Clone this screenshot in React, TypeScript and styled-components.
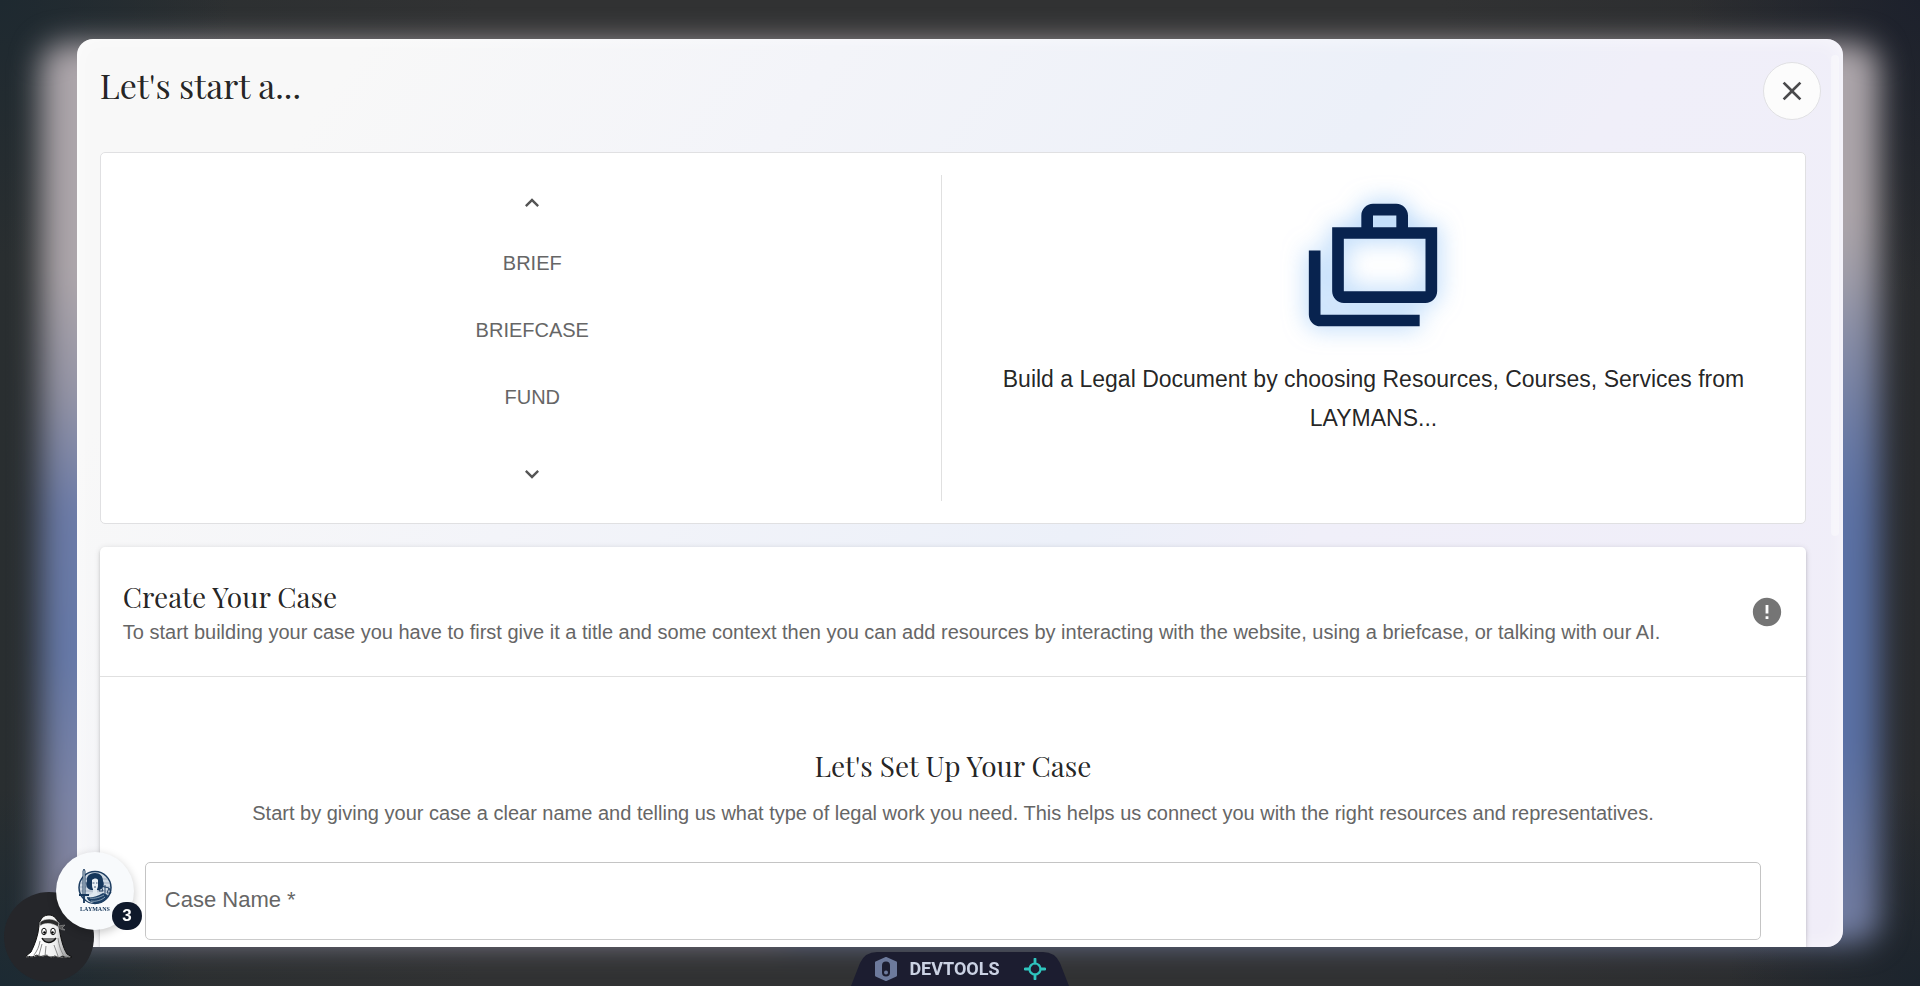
import React from "react";
import styled, { createGlobalStyle } from "styled-components";

const serif = `"Playfair Display", "Liberation Serif", serif`;
const sans = `"Liberation Sans", Arial, sans-serif`;

const GlobalStyle = createGlobalStyle`
  *, *::before, *::after { box-sizing: border-box; }
  body {
    margin: 0;
    font-family: ${sans};
    color: rgba(0, 0, 0, 0.87);
    background: #2c2f31;
  }
  h1, h2, h3, p, ul { margin: 0; padding: 0; font-weight: 400; }
  button { font: inherit; border: 0; padding: 0; background: none; cursor: pointer; }
`;

const Backdrop = styled.div`
  position: relative;
  height: 100vh;
  padding: 4vh 4vw;
  overflow: hidden;
  background:
    radial-gradient(ellipse 12% 26% at 0 0, #1e2930, transparent),
    radial-gradient(ellipse 12% 30% at 100% 0, #1d212c, transparent),
    radial-gradient(ellipse 10% 20% at 0 100%, #1c2a33, transparent),
    radial-gradient(ellipse 10% 20% at 100% 100%, #1c242d, transparent),
    linear-gradient(90deg, #292e30, #313233 25%, #313233 75%, #292b2e);
`;

const Glow = styled.div`
  position: absolute;
  inset: 43px 41px;
  border-radius: 24px;
  filter: blur(15px);
  background: linear-gradient(180deg, #aca5aa 0, #aca5aa 26%, #9494a6 39%, #6c7ba7 52%, #6679a8 68%, #7c84a6 84%, #868498 100%);
  &::after {
    content: "";
    position: absolute;
    inset: 0 0 0 40%;
    border-radius: inherit;
    background: linear-gradient(180deg, transparent 20%, #5a70a4 58%, #5a70a4 78%, #707ba0 96%);
  }
`;

const Dialog = styled.main`
  position: relative;
  height: 100%;
  display: flex;
  flex-direction: column;
  overflow: hidden;
  border-radius: 16px;
  background: linear-gradient(125deg, #f8f8f8 12%, #f3f4f9 32%, #ecf0f9 56%, #f0eff9 66%, #f0edf8);
  &::after {
    content: "";
    position: absolute;
    inset: 0;
    border-radius: inherit;
    pointer-events: none;
    box-shadow: inset 0 0 20px rgba(255, 255, 255, 0.6);
  }
`;

const DialogHeader = styled.header`
  flex: none;
  display: flex;
  justify-content: space-between;
  align-items: flex-start;
  padding: 23px 22px 32px 23px;
`;

const Title = styled.h1`
  font: 400 34px/46px ${serif};
`;

const CloseButton = styled.button`
  width: 58px;
  height: 58px;
  display: grid;
  place-items: center;
  border: 1px solid #e0e0e3;
  border-radius: 50%;
  background: #fcfcfc;
  color: #4a4a4c;
`;

const DialogBody = styled.div`
  flex: 1;
  min-height: 0;
  overflow: hidden;
  display: flex;
  flex-direction: column;
  gap: 23px;
  padding: 0 37px 0 23px;
  > * { flex: none; }
`;

const ScrollThumb = styled.div`
  position: absolute;
  top: 16px;
  right: 4px;
  width: 8px;
  height: 53%;
  border-radius: 4px;
  background: rgba(255, 255, 255, 0.4);
`;

const Chooser = styled.section`
  display: grid;
  grid-template-columns: minmax(0, 18fr) minmax(0, 19fr);
  padding: 22px 0 22px 23px;
  border: 1px solid #e0e0e2;
  border-radius: 5px;
  background: #ffffff;
`;

const Picker = styled.div`
  height: 326px;
  display: flex;
  flex-direction: column;
  align-items: center;
  border-right: 1px solid #e0e0e0;
`;

const ArrowButton = styled.button`
  width: 55px;
  height: 55px;
  display: grid;
  place-items: center;
  color: #555555;
`;

const Options = styled.ul`
  flex: 1;
  list-style: none;
`;

const Option = styled.button`
  display: block;
  width: 100%;
  height: 67px;
  font-size: 20px;
  color: #666666;
  text-transform: uppercase;
`;

const Summary = styled.div`
  display: flex;
  flex-direction: column;
  align-items: center;
  gap: 22px;
  padding: 23px;
  text-align: center;
  font-size: 23px;
  line-height: 39px;
  svg { filter: drop-shadow(0 0 12px rgba(100, 170, 245, 0.65)); }
`;

const Card = styled.section`
  border-radius: 5px;
  background: #ffffff;
  box-shadow: 0 2px 3px rgba(0, 0, 0, 0.16), 0 1px 6px rgba(0, 0, 0, 0.12);
`;

const CardHeader = styled.div`
  display: flex;
  align-items: center;
  justify-content: space-between;
  height: 130px;
  padding: 0 22px 0 23px;
  border-bottom: 1px solid #e0e0e0;
`;

const Heading = styled.h2`
  font: 400 28px/40px ${serif};
`;

const Note = styled.p`
  font-size: 20px;
  line-height: 30px;
  color: #666666;
`;

const InfoButton = styled.button`
  display: grid;
  color: #757575;
`;

const Form = styled.form`
  display: flex;
  flex-direction: column;
  align-items: center;
  gap: 12px;
  padding: 69px 45px 45px;
`;

const Field = styled.input`
  width: 100%;
  height: 78px;
  margin-top: 22px;
  padding: 0 19px 3px;
  border: 1px solid #c4c4c4;
  border-radius: 5px;
  background: transparent;
  font: 400 22px ${sans};
  &::placeholder { color: #666666; opacity: 1; }
`;

const Mascot = styled.button`
  position: fixed;
  left: 4px;
  bottom: 4px;
  width: 90px;
  height: 90px;
  display: grid;
  place-items: center;
  border-radius: 50%;
  background: #25262a;
`;

const Assistant = styled.button`
  position: fixed;
  left: 56px;
  bottom: 56px;
  width: 78px;
  height: 78px;
  display: grid;
  place-items: center;
  border-radius: 50%;
  background: #f8fafc;
  box-shadow: 0 3px 10px rgba(0, 0, 0, 0.22);
`;

const Badge = styled.span`
  position: absolute;
  right: -8px;
  bottom: 0;
  width: 30px;
  height: 28px;
  border-radius: 14px;
  background: #0f192b;
  color: #ffffff;
  font: 700 17px/28px ${sans};
`;

const DevTools = styled.div`
  position: fixed;
  left: 50%;
  bottom: 0;
  width: 218px;
  height: 34px;
  transform: translateX(-50%);
  display: flex;
  align-items: center;
  justify-content: center;
`;

const DevShape = styled.svg`
  position: absolute;
  inset: 0;
`;

const DevButton = styled.button`
  position: relative;
  display: flex;
  align-items: center;
  gap: 11px;
  margin-right: 24px;
  color: #cbd2e3;
  font: 700 18px/24px Roboto, sans-serif;
`;

const TargetButton = styled.button`
  position: relative;
  display: grid;
`;

const Material = ({ d, size }: { d: string; size: number }) => (
  <svg width={size} height={size} viewBox="0 0 24 24" fill="currentColor" aria-hidden="true">
    <path d={d} />
  </svg>
);

const Ghost = () => (
  <svg width="50" height="46" viewBox="0 0 50 46" aria-hidden="true">
    <defs>
      <linearGradient id="sheet" x1="0" x2="1">
        <stop offset="0.25" stopColor="#ffffff" />
        <stop offset="0.65" stopColor="#eeeeee" />
        <stop offset="1" stopColor="#77787a" />
      </linearGradient>
    </defs>
    <path d="M15 12C16 4 20 1 25 1s9 4 10 11c1 10 4 22 8 28l5 3c-4 2-7 0-10-1-2 2-4 2-7 0-4 2-7 1-9-1-4 2-7 2-9 0-3 2-7 2-11 1l5-4C11 30 14 22 15 12z" fill="url(#sheet)" stroke="#111" strokeWidth="1" />
    <path d="M16 8c5-4 14-4 19 1l-1 4c-5-4-13-5-18-1z" fill="#2b2b2b" stroke="#e6e6e6" strokeWidth=".6" />
    <path d="M34 12l7-1-3 3 3 2c-3 0-5-1-7-3z" fill="#555" stroke="#aaa" strokeWidth=".5" />
    <ellipse cx="20" cy="17.500" rx="2.300" ry="3.300" fill="#fff" stroke="#111" />
    <ellipse cx="29" cy="17.500" rx="2.300" ry="3.300" fill="#fff" stroke="#111" />
    <circle cx="20.500" cy="18.500" r="1.300" />
    <circle cx="28.500" cy="18.500" r="1.300" />
    <path d="M18 24c3 6 10 6 14 0" fill="#777" stroke="#111" strokeWidth="1.400" />
    <path d="M16 27c-1 6-3 10-6 14M22 32l-1 10M30 31l4 11M34 24c1 8 3 13 6 18M18 30l-3 11" fill="none" stroke="#8a8a8a" strokeWidth="1" />
    <path d="M2 43c4-1 8 1 12-2 3 2 6 1 9 0 3 2 5 3 8 1 4 2 8 1 15 1" fill="none" stroke="#777" strokeWidth="1" strokeDasharray="3 1" />
  </svg>
);

const Emblem = () => (
  <svg width="38" height="44" viewBox="0 0 38 44" aria-hidden="true">
    <circle cx="19" cy="18.500" r="16" fill="#cfd9e3" stroke="#1c3c60" strokeWidth="1.500" />
    <g stroke="#8396ab" strokeWidth=".6">
      <path d="M6 10h26M4 14h30M4 18h30M4 22h30M6 26h26" />
    </g>
    <path d="M19 4c-6 0-9 4-8 8-2 4 0 8 4 9h8c4-1 6-5 4-9 0-5-3-8-8-8z" fill="#15365a" />
    <path d="M16 11c2-2 5-2 6 0v5c0 3-1 5-3 5s-3-2-3-5z" fill="#e9eff4" />
    <path d="M16.500 14h2M20 14h1.500M18 18h2" stroke="#15365a" strokeWidth=".8" />
    <path d="M17 20h4v4l7 3c1 3-3 7-9 7s-10-3-10-6l8-4z" fill="#dfe8ef" />
    <path d="M11 28c5 1 9 0 16-4 3 1 5 2 5 3-3 6-8 8-14 7-4-1-7-3-7-6z" fill="#1b3f65" />
    <path d="M14 29c5 1 10-1 14-3M15 32c5 1 11-1 14-4" fill="none" stroke="#a4b7c8" strokeWidth=".8" />
    <path d="M7 2l1-2 1 2v24H7z" fill="#d8e2ea" stroke="#15365a" strokeWidth=".9" />
    <path d="M3 26h10M8 26v8" stroke="#15365a" strokeWidth="1.800" />
    <path d="M25 17l8 2M29 16v9M25 17l-2 5h4zM33 19l-2 5h4z" fill="none" stroke="#15365a" strokeWidth=".9" />
    <text x="19" y="42" textAnchor="middle" fontFamily="Liberation Serif, serif" fontSize="6" fontWeight="700" fill="#15365a">LAYMANS</text>
  </svg>
);

const options = ["Brief", "Briefcase", "Fund"];

export default function App() {
  return (
    <>
      <GlobalStyle />
      <Backdrop>
        <Glow />
        <Dialog>
          <DialogHeader>
            <Title>Let's start a...</Title>
            <CloseButton aria-label="Close">
              <Material size={32} d="M19 6.410 17.590 5 12 10.590 6.410 5 5 6.410 10.590 12 5 17.590 6.410 19 12 13.410 17.590 19 19 17.590 13.410 12z" />
            </CloseButton>
          </DialogHeader>
          <DialogBody>
            <Chooser>
              <Picker>
                <ArrowButton aria-label="Previous">
                  <Material size={28} d="M12 8l-6 6 1.410 1.410L12 10.830l4.590 4.580L18 14z" />
                </ArrowButton>
                <Options>
                  {options.map((name) => (
                    <li key={name}>
                      <Option>{name}</Option>
                    </li>
                  ))}
                </Options>
                <ArrowButton aria-label="Next">
                  <Material size={28} d="M16.590 8.590 12 13.170 7.410 8.590 6 10l6 6 6-6z" />
                </ArrowButton>
              </Picker>
              <Summary>
                <svg width="140" height="140" viewBox="0 0 24 24" fill="#08234f" aria-hidden="true">
                  <path d="M18 5V3c0-1.100-.9-2-2-2h-4c-1.100 0-2 .9-2 2v2H5v11c0 1.100.9 2 2 2h14c1.100 0 2-.9 2-2V5h-5zm-6-2h4v2h-4V3zm9 13H7V7h14v9z" />
                  <path d="M3 9H1v11c0 1.100.9 2 2 2h17v-2H3V9z" />
                </svg>
                <p>Build a Legal Document by choosing Resources, Courses, Services from LAYMANS...</p>
              </Summary>
            </Chooser>
            <Card>
              <CardHeader>
                <div>
                  <Heading>Create Your Case</Heading>
                  <Note>
                    To start building your case you have to first give it a title and some context then you can add
                    resources by interacting with the website, using a briefcase, or talking with our AI.
                  </Note>
                </div>
                <InfoButton aria-label="More information">
                  <Material size={34} d="M12 2C6.480 2 2 6.480 2 12s4.480 10 10 10 10-4.480 10-10S17.520 2 12 2zm1 15h-2v-2h2v2zm0-4h-2V7h2v6z" />
                </InfoButton>
              </CardHeader>
              <Form onSubmit={(event) => event.preventDefault()}>
                <Heading>Let's Set Up Your Case</Heading>
                <Note>
                  Start by giving your case a clear name and telling us what type of legal work you need. This helps us
                  connect you with the right resources and representatives.
                </Note>
                <Field aria-label="Case Name" placeholder="Case Name *" required />
              </Form>
            </Card>
          </DialogBody>
          <ScrollThumb />
        </Dialog>
      </Backdrop>
      <Mascot aria-label="Mascot">
        <Ghost />
      </Mascot>
      <Assistant aria-label="Open assistant">
        <Emblem />
        <Badge>3</Badge>
      </Assistant>
      <DevTools>
        <DevShape width="218" height="34" viewBox="0 0 218 34" aria-hidden="true">
          <path d="M0 34 9 11Q14 0 26 0H192Q204 0 209 11L218 34z" fill="#1c1d30" />
        </DevShape>
        <DevButton>
          <svg width="24" height="24" viewBox="0 0 24 24" aria-hidden="true">
            <path d="M12 1 22 5.500v13L12 23 2 18.500V5.500z" fill="#6d7a9c" stroke="#6d7a9c" strokeWidth="2" strokeLinejoin="round" />
            <rect x="8" y="4.500" width="8" height="15" rx="4" fill="#1c1d30" />
            <circle cx="12" cy="15.500" r="2" fill="#6d7a9c" />
          </svg>
          DEVTOOLS
        </DevButton>
        <TargetButton aria-label="Inspect">
          <svg width="22" height="22" viewBox="0 0 22 22" fill="none" stroke="#2fc4bd" aria-hidden="true">
            <circle cx="11" cy="11" r="5.500" strokeWidth="2.200" />
            <path d="M11 1v4M11 17v4M1 11h4M17 11h4" strokeWidth="2.800" strokeLinecap="round" />
          </svg>
        </TargetButton>
      </DevTools>
    </>
  );
}
